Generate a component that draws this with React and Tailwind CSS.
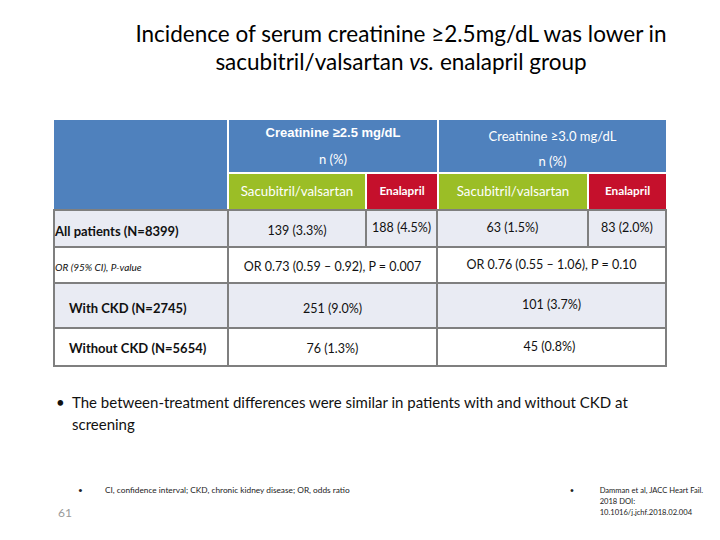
const calibri = { fontFamily: "Lato, 'Open Sans', sans-serif" };

function Bullet({ className, children }) {
  return <span className={className}>{children}</span>;
}

export default function App() {
  return (
    <div
      className="w-[720px] h-[540px] bg-white text-[#111] overflow-hidden flex flex-col"
      style={calibri}
    >
      {/* title */}
      <div className="pt-[20px] pl-[82px] text-center text-[22.5px] leading-[28px] text-black">
        <div>Incidence of serum creatinine ≥2.5mg/dL was lower in</div>
        <div>
          sacubitril/valsartan <i>vs.</i> enalapril group
        </div>
      </div>

      {/* table header */}
      <div className="mt-[44px] ml-[54px] grid grid-cols-[173px_136px_70px_148px_77px] grid-rows-[52px_35px] gap-[2px] w-[612px]">
        <div className="row-span-2 bg-[#4f81bd]" />
        <div className="col-span-2 bg-[#4f81bd] text-white flex flex-col items-center">
          <div
            className="h-[26px] leading-[26px] text-[13px] font-bold"
            style={{ fontFamily: "'Liberation Sans', Arial, sans-serif" }}
          >
            Creatinine ≥2.5 mg/dL
          </div>
          <div className="h-[26px] leading-[26px] text-[13px]">n (%)</div>
        </div>
        <div className="col-span-2 bg-[#4f81bd] text-white flex flex-col items-center pt-[3px]">
          <div className="h-[26px] leading-[26px] text-[13px]">Creatinine ≥3.0 mg/dL</div>
          <div className="h-[24px] leading-[24px] text-[13px]">n (%)</div>
        </div>
        <div className="bg-[#9bbe26] text-white text-[13.3px] flex items-center justify-center">
          Sacubitril/valsartan
        </div>
        <div className="bg-[#c5102c] text-white text-[11.8px] font-bold flex items-center justify-center pb-[2px]">
          Enalapril
        </div>
        <div className="bg-[#9bbe26] text-white text-[13.3px] flex items-center justify-center pt-[1px]">
          Sacubitril/valsartan
        </div>
        <div className="bg-[#c5102c] text-white text-[11.8px] font-bold flex items-center justify-center pb-[2px]">
          Enalapril
        </div>
      </div>

      {/* table body */}
      <div className="ml-[53px] w-[614px] bg-[#7f7f7f] p-[2px] grid grid-cols-[172px_136px_69px_149px_76px] grid-rows-[35px_34px_43px_36px] gap-[2px] text-[12.5px]">
        <div className="bg-[#e9ebf3] flex items-center pt-[6px] font-bold text-[13px]">All patients (N=8399)</div>
        <div className="bg-[#e9ebf3] flex items-center justify-center pt-[6px]">139 (3.3%)</div>
        <div className="bg-[#e9ebf3] flex items-center justify-center">188 (4.5%)</div>
        <div className="bg-[#e9ebf3] flex items-center justify-center">63 (1.5%)</div>
        <div className="bg-[#e9ebf3] flex items-center justify-center">83 (2.0%)</div>

        <div className="bg-white flex items-center pt-[5px] italic text-[10px]">OR (95% CI), P-value</div>
        <div className="col-span-2 bg-white flex items-center justify-center pt-[5px]">
          OR 0.73 (0.59 – 0.92), P = 0.007
        </div>
        <div className="col-span-2 bg-white flex items-center justify-center">
          OR 0.76 (0.55 – 1.06), P = 0.10
        </div>

        <div className="bg-[#e9ebf3] flex items-center pl-[14px] pt-[6px] font-bold text-[13px]">With CKD (N=2745)</div>
        <div className="col-span-2 bg-[#e9ebf3] flex items-center justify-center pt-[8px]">251 (9.0%)</div>
        <div className="col-span-2 bg-[#e9ebf3] flex items-center justify-center">101 (3.7%)</div>

        <div className="bg-white flex items-center pl-[14px] pt-[4px] font-bold text-[13px]">Without CKD (N=5654)</div>
        <div className="col-span-2 bg-white flex items-center justify-center pt-[4px]">76 (1.3%)</div>
        <div className="col-span-2 bg-white flex items-center justify-center pr-[4px]">45 (0.8%)</div>
      </div>

      {/* bullet */}
      <div className="mt-[24px] ml-[56px] flex text-[15px] leading-[22px] text-[#111]">
        <Bullet className="w-[16px] shrink-0">•</Bullet>
        <div className="w-[570px]">
          The between-treatment differences were similar in patients with and without CKD at screening
        </div>
      </div>

      {/* footer */}
      <div className="mt-[50px] flex text-[7.6px] leading-[11px] text-[#222]">
        <div className="ml-[58px] flex flex-col">
          <div className="flex ml-[20px] text-[8.3px]">
            <Bullet className="w-[27px]">•</Bullet>
            <span>CI, confidence interval; CKD, chronic kidney disease; OR, odds ratio</span>
          </div>
          <div className="mt-[9px] text-[12px] leading-[16px] text-[#9a9a9a]">61</div>
        </div>
        <div className="ml-[220px] flex">
          <Bullet className="w-[30px]">•</Bullet>
          <div>
            <div>Damman et al, JACC Heart Fail.</div>
            <div>2018 DOI:</div>
            <div>10.1016/j.jchf.2018.02.004</div>
          </div>
        </div>
      </div>
    </div>
  );
}
